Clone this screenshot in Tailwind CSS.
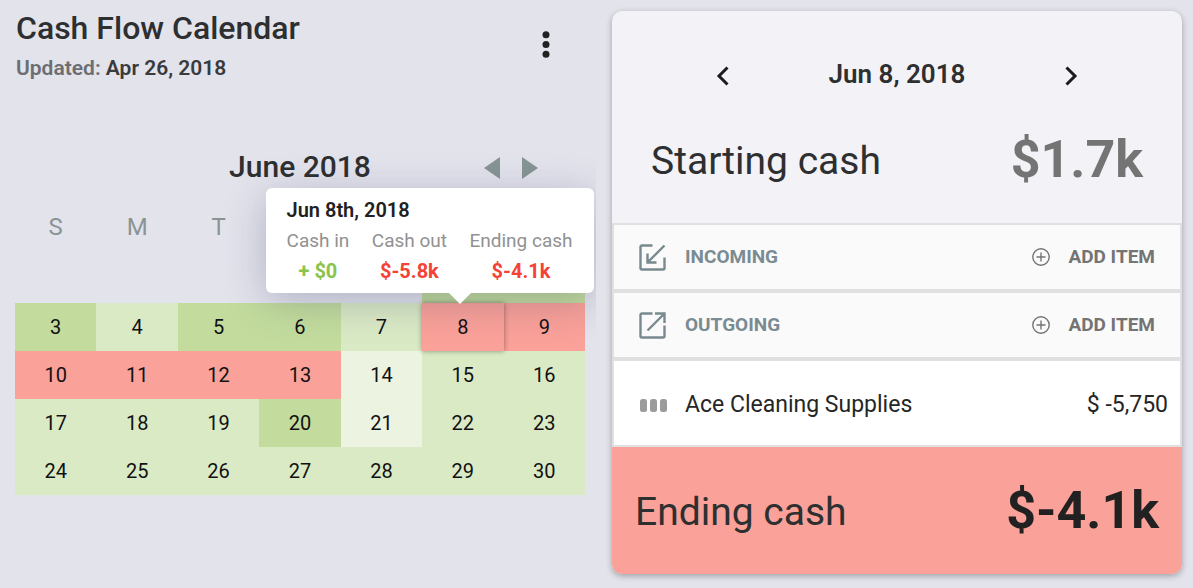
<!DOCTYPE html>
<html lang="en">
<head>
<meta charset="utf-8">
<meta name="viewport" content="width=device-width, initial-scale=1">
<title>Cash Flow Calendar</title>
<script src="https://cdn.jsdelivr.net/npm/@tailwindcss/browser@4"></script>
</head>
<body class="min-h-screen bg-[#e3e3ec] font-[Roboto,sans-serif] text-[#2d2f30]">
<main class="grid min-h-screen grid-cols-[596fr_570fr] gap-4 pr-[11px]">
  <section class="flex flex-col overflow-hidden pr-[11px] pl-[15px]">
    <header class="flex items-start justify-between pt-2 pr-[23px] pl-px">
      <div>
        <h1 class="text-[32px] leading-10 font-medium">Cash Flow Calendar</h1>
        <p class="mt-1 text-[21px] leading-8 font-semibold text-[#6c6e72]">Updated: <time class="text-[#3a3b3d]">Apr 26, 2018</time></p>
      </div>
      <button type="button" aria-label="More options" class="mt-5 flex w-8 justify-center">
        <svg class="h-8 w-2" viewBox="0 0 8 32" fill="#212121"><circle cx="4" cy="6.700" r="3.500"/><circle cx="4" cy="16.500" r="3.500"/><circle cx="4" cy="26.200" r="3.500"/></svg>
      </button>
    </header>

    <div class="mt-[63px] grid grid-cols-[1fr_auto_1fr] items-center">
      <h2 class="col-start-2 text-[30px] leading-10 font-medium">June 2018</h2>
      <div class="flex justify-end gap-[22px] pt-0.5 pr-[47px]">
        <button type="button" aria-label="Previous month"><svg class="h-[22px] w-4" viewBox="0 0 16 22" fill="#869595"><path d="M16 0v22L0 11z"/></svg></button>
        <button type="button" aria-label="Next month"><svg class="h-[22px] w-4" viewBox="0 0 16 22" fill="#869595"><path d="M0 0v22L16 11z"/></svg></button>
      </div>
    </div>

    <table class="mt-1 w-full table-fixed border-separate border-spacing-0 text-center text-[20px] text-[#111]">
      <thead>
        <tr class="h-16 text-[24px] text-[#8a9494]">
          <th class="pt-2 font-normal">S</th><th class="pt-2 font-normal">M</th><th class="pt-2 font-normal">T</th><th aria-label="Wednesday"></th><th aria-label="Thursday"></th><th aria-label="Friday"></th><th aria-label="Saturday"></th>
        </tr>
      </thead>
      <tbody>
        <tr class="h-12"><td colspan="5"></td><td class="bg-[#c3dc9d]" aria-label="1"></td><td class="bg-[#c3dc9d]" aria-label="2"></td></tr>
        <tr class="h-12">
          <td class="bg-[#c3dc9d]">3</td><td class="bg-[#daeac5]">4</td><td class="bg-[#c3dc9d]">5</td><td class="bg-[#c3dc9d]">6</td><td class="bg-[#daeac5]">7</td>
          <td class="relative z-10 bg-[#faa199] shadow-[0_0_5px_rgba(0,0,0,0.4)]">8
            <div role="tooltip" class="absolute -right-[90px] bottom-full mb-2.5 w-[328px] rounded-md bg-white px-[21px] pt-2 pb-[7px] text-left shadow-[0_8px_40px_rgba(40,50,90,0.28)]">
              <p class="text-[20px] leading-7 font-semibold text-[#212121]">Jun 8th, 2018</p>
              <dl class="flex justify-between text-center text-[20px] leading-[30px]">
                <div><dt class="mt-0.5 text-[19px] text-[#919191]">Cash in</dt><dd class="font-bold text-[#8bc34a]">+ $0</dd></div>
                <div><dt class="mt-0.5 text-[19px] text-[#919191]">Cash out</dt><dd class="font-bold text-[#f44336]">$-5.8k</dd></div>
                <div><dt class="mt-0.5 text-[19px] text-[#919191]">Ending cash</dt><dd class="font-bold text-[#f44336]">$-4.1k</dd></div>
              </dl>
              <svg class="absolute top-full right-[122px] -mt-px h-3 w-6" viewBox="0 0 24 12" fill="#fff"><path d="M0 0h24L12 12z"/></svg>
            </div>
          </td>
          <td class="bg-[#faa199]">9</td>
        </tr>
        <tr class="h-12 bg-[#faa199]"><td>10</td><td>11</td><td>12</td><td>13</td><td class="bg-[#ecf3e1]">14</td><td class="bg-[#daeac5]">15</td><td class="bg-[#daeac5]">16</td></tr>
        <tr class="h-12 bg-[#daeac5]"><td>17</td><td>18</td><td>19</td><td class="bg-[#c3dc9d]">20</td><td class="bg-[#ecf3e1]">21</td><td>22</td><td>23</td></tr>
        <tr class="h-12 bg-[#daeac5]"><td>24</td><td>25</td><td>26</td><td>27</td><td>28</td><td>29</td><td>30</td></tr>
      </tbody>
    </table>
  </section>

  <section class="mt-[11px] mb-3.5 flex flex-col self-start rounded-[10px] bg-[#f3f2f7] shadow-[0_2px_6px_rgba(0,0,0,0.3)]">
    <div class="flex items-center justify-between px-[101px] pt-[45px]">
      <button type="button" aria-label="Previous day"><svg class="mt-1 h-5 w-5" viewBox="0 0 20 20" fill="none" stroke="#1b1b1e" stroke-width="3"><path d="M14.500 1.500L6 10L14.500 18.500"/></svg></button>
      <h2 class="text-[26px] leading-9 font-semibold">Jun 8, 2018</h2>
      <button type="button" aria-label="Next day"><svg class="mt-1 h-5 w-5" viewBox="0 0 20 20" fill="none" stroke="#1b1b1e" stroke-width="3"><path d="M5.500 1.500L14 10L5.500 18.500"/></svg></button>
    </div>
    <div class="flex items-center justify-between px-[39px] pt-9 pb-[31px]">
      <h3 class="pt-0.5 text-[39px] leading-[60px]">Starting cash</h3>
      <strong class="text-[52px] leading-[64px] font-bold text-[#747474]">$1.7k</strong>
    </div>

    <div class="flex flex-col gap-1 border-2 border-[#e0e0e0] bg-[#e0e0e0]">
      <div class="flex h-16 items-center bg-[#fafafa] px-[25px]">
        <svg class="h-[27px] w-[27px]" viewBox="0 0 27 27" fill="none" stroke="#78898f" stroke-width="2.400"><path d="M13.500 1.500H3a1.500 1.500 0 0 0-1.500 1.500v21A1.500 1.500 0 0 0 3 25.500h21a1.500 1.500 0 0 0 1.500-1.500V13.500M25.500 1.500L9 18M8.500 9.500v9H17.500"/></svg>
        <h4 class="ml-[19px] text-[19px] font-bold text-[#7a8b92]">INCOMING</h4>
        <button type="button" class="ml-auto flex items-center gap-[18px] text-[19px] font-bold text-[#747474]">
          <svg class="h-[18px] w-[18px]" viewBox="0 0 18 18" fill="none" stroke="currentColor" stroke-width="1.400"><circle cx="9" cy="9" r="8.200"/><path d="M9 4.500v9M4.500 9h9"/></svg>ADD ITEM</button>
      </div>
      <div class="flex h-16 items-center bg-[#fafafa] px-[25px]">
        <svg class="h-[27px] w-[27px]" viewBox="0 0 27 27" fill="none" stroke="#78898f" stroke-width="2.400"><path d="M13.500 1.500H3a1.500 1.500 0 0 0-1.500 1.500v21A1.500 1.500 0 0 0 3 25.500h21a1.500 1.500 0 0 0 1.500-1.500V13.500M25 2L8.500 18.500M16 1.500h9.500V11"/></svg>
        <h4 class="ml-[19px] text-[19px] font-bold text-[#7a8b92]">OUTGOING</h4>
        <button type="button" class="ml-auto flex items-center gap-[18px] text-[19px] font-bold text-[#747474]">
          <svg class="h-[18px] w-[18px]" viewBox="0 0 18 18" fill="none" stroke="currentColor" stroke-width="1.400"><circle cx="9" cy="9" r="8.200"/><path d="M9 4.500v9M4.500 9h9"/></svg>ADD ITEM</button>
      </div>
      <div class="flex h-[84px] items-center bg-white pt-1 pr-3 pl-[26px] text-[23px] text-[#262626]">
        <svg class="h-[13px] w-[27px]" viewBox="0 0 27 13" fill="#9b9b9b"><rect width="7" height="13" rx="2.500"/><rect x="10" width="7" height="13" rx="2.500"/><rect x="20" width="7" height="13" rx="2.500"/></svg>
        <span class="ml-[18px]">Ace Cleaning Supplies</span>
        <span class="ml-auto">$ -5,750</span>
      </div>
    </div>

    <div class="flex items-center justify-between rounded-b-[10px] bg-[#faa199] pt-8 pr-[23px] pb-[31px] pl-[23px]">
      <h3 class="pt-0.5 text-[39px] leading-[60px]">Ending cash</h3>
      <strong class="text-[52px] leading-[64px] font-bold text-[#212121]">$-4.1k</strong>
    </div>
  </section>
</main>
</body>
</html>
